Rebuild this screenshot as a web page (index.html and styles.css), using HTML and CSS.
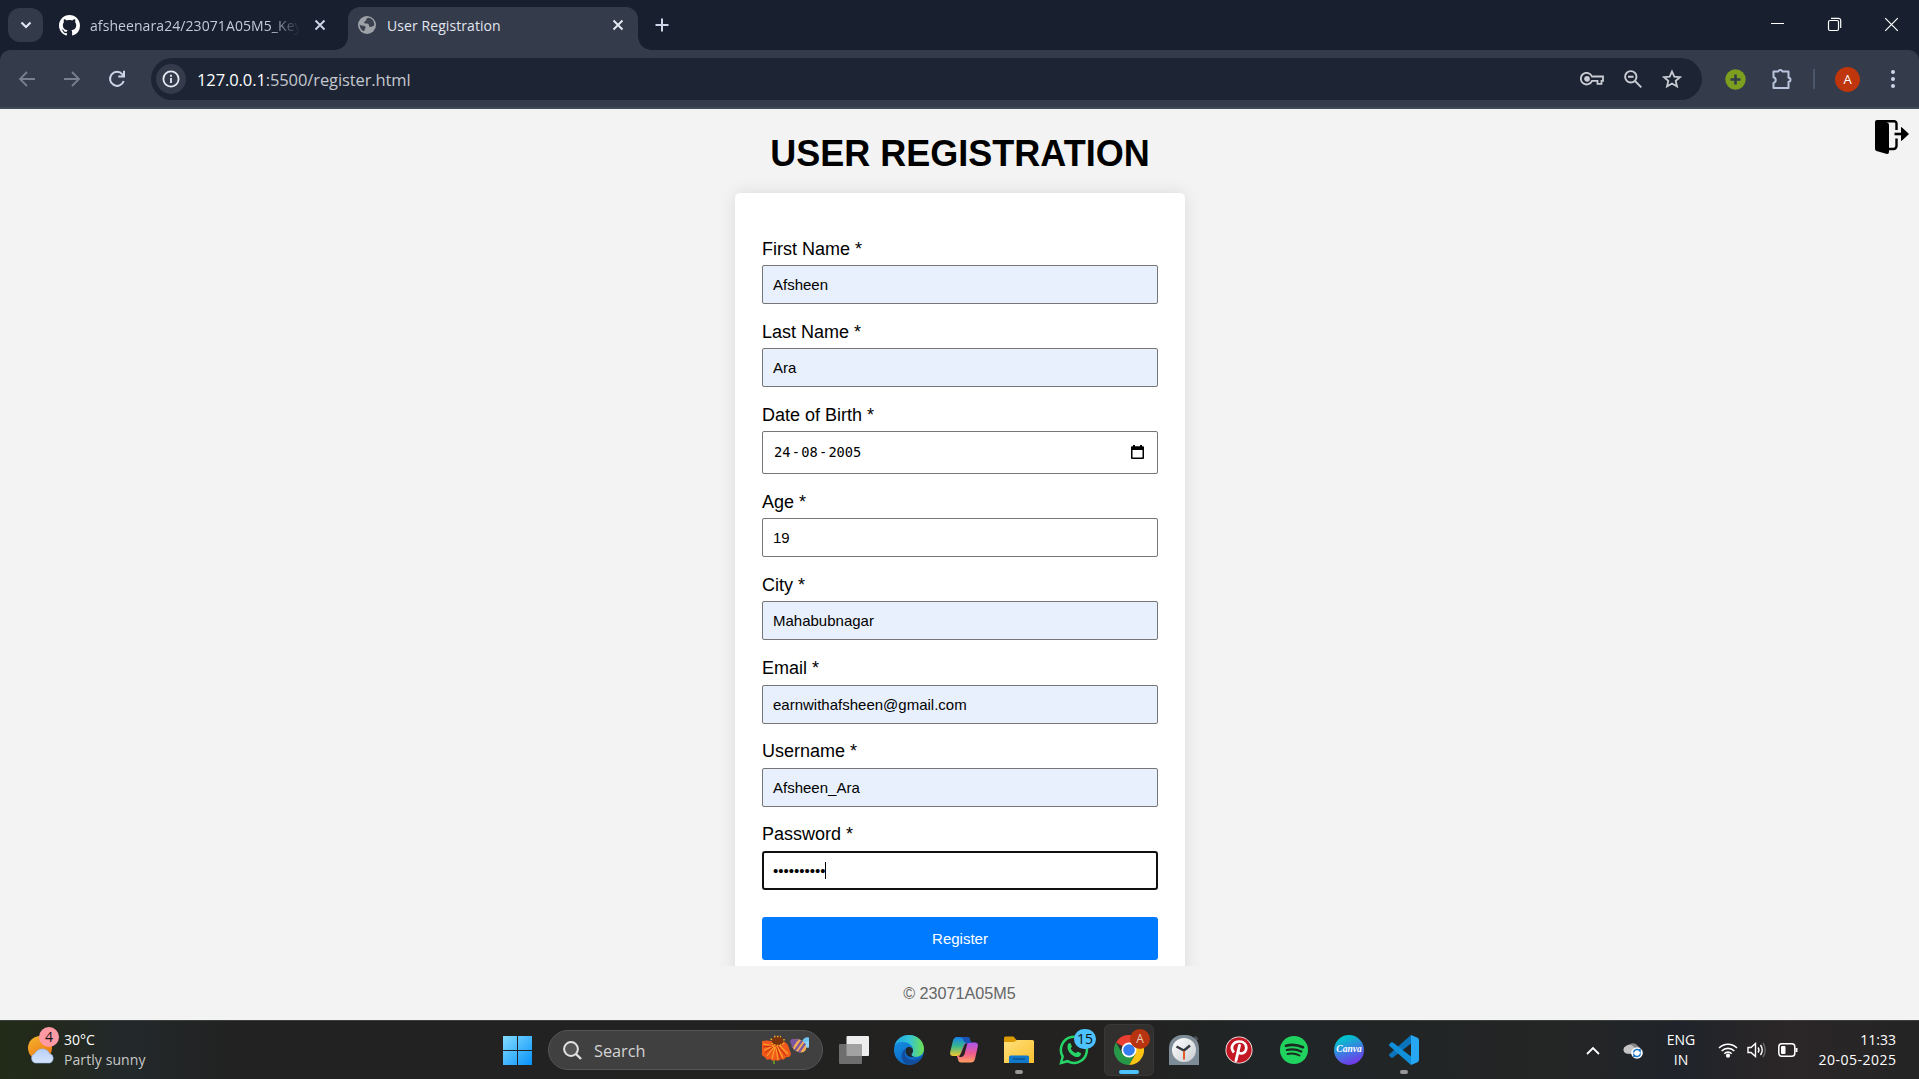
FILE: index.html
```html
<!DOCTYPE html>
<html lang="en">
<head>
<meta charset="utf-8">
<title>User Registration</title>
<link rel="stylesheet" href="styles.css">
</head>
<body>
<header class="tabstrip">
  <div class="tab-search"><svg width="12" height="12" viewBox="0 0 12 12" fill="none" stroke="#dfe5f2" stroke-width="2.2"><path d="M1.5 3.5 6 8l4.500-4.500"/></svg></div>
  <div class="tab">
    <svg width="21" height="21" viewBox="0 0 16 16" fill="#fff"><path d="M8 0C3.580 0 0 3.580 0 8c0 3.540 2.290 6.530 5.470 7.590.4.070.55-.17.55-.38 0-.19-.01-.82-.01-1.490-2.010.37-2.530-.49-2.690-.94-.09-.23-.48-.94-.82-1.130-.28-.15-.68-.52-.01-.53.63-.01 1.080.58 1.230.82.72 1.210 1.870.87 2.330.66.07-.52.28-.87.51-1.070-1.780-.2-3.640-.89-3.640-3.950 0-.87.31-1.590.82-2.150-.08-.2-.36-1.020.08-2.120 0 0 .67-.21 2.200.82.64-.18 1.320-.27 2-.27s1.360.09 2 .27c1.530-1.040 2.200-.82 2.200-.82.44 1.100.16 1.920.08 2.120.51.56.82 1.270.82 2.150 0 3.070-1.870 3.750-3.650 3.950.29.25.54.73.54 1.480 0 1.070-.01 1.930-.01 2.200 0 .21.15.46.55.38A8.010 8.010 0 0 0 16 8c0-4.420-3.580-8-8-8z"/></svg>
    <span class="tab-title fade">afsheenara24/23071A05M5_Key</span>
    <svg class="x" width="12" height="12" viewBox="0 0 12 12" stroke="#cdd6e8" stroke-width="1.900"><path d="M1.500 1.500l9 9M10.500 1.500l-9 9"/></svg>
  </div>
  <div class="tab active">
    <svg width="18" height="18" viewBox="0 0 18 18"><circle cx="9" cy="9" r="9" fill="#9da2a8"/><path d="M10.500 1.800C7.500 2 9 4.500 7.300 5.200 5.500 5.800 6 7.500 7.500 7.500c2 0 3.500.3 3.500 2 0 1.500 1.200 1.700 2.500 1.200l2.800-1.200C16.500 5 14 2.200 10.500 1.800zM1.700 8.500C3.500 10.500 6.500 8.800 7.500 10.800c.6 1.200-.8 2-.8 2.900 0 1-.7 1.300-1.700 1.300C2.800 13.500 1.700 11 1.700 8.500z" fill="#3b4351"/></svg>
    <span class="tab-title">User Registration</span>
    <svg class="x" width="12" height="12" viewBox="0 0 12 12" stroke="#e6eaf3" stroke-width="1.900"><path d="M1.500 1.500l9 9M10.500 1.500l-9 9"/></svg>
  </div>
  <svg class="new-tab" width="14" height="14" viewBox="0 0 14 14" stroke="#cdd6e8" stroke-width="2"><path d="M7 .5v13M.5 7h13"/></svg>
  <div class="window-buttons">
    <svg width="15" height="15" viewBox="0 0 15 15" stroke="#fff"><path d="M1 6.500h13"/></svg>
    <svg width="15" height="15" viewBox="0 0 15 15" fill="none" stroke="#fff" stroke-width="1.200"><rect x="1.500" y="3.500" width="10" height="10" rx="1.500"/><path d="M4 1.300h7.500a2.200 2.200 0 0 1 2.200 2.200V11"/></svg>
    <svg width="15" height="15" viewBox="0 0 15 15" stroke="#fff" stroke-width="1.200"><path d="M1.200 1.200l12.600 12.600M13.800 1.200 1.200 13.800"/></svg>
  </div>
</header>
<nav class="toolbar">
  <div class="nav-icons">
    <svg width="18" height="18" viewBox="0 0 18 18" fill="none" stroke="#77808f" stroke-width="1.800"><path d="M17 9H2.500M9 2 2 9l7 7"/></svg>
    <svg width="18" height="18" viewBox="0 0 18 18" fill="none" stroke="#77808f" stroke-width="1.800"><path d="M1 9h14.500M9 2l7 7-7 7"/></svg>
    <svg width="18" height="18" viewBox="0 0 18 18" fill="none" stroke="#cdd6e8" stroke-width="2"><path d="M15.700 11A7 7 0 1 1 14.500 4.500L16 6.200M16 .8v5.700h-5.700"/></svg>
  </div>
  <div class="omnibox">
    <span class="info"><svg width="18" height="18" viewBox="0 0 18 18" fill="none" stroke="#e6eaf3" stroke-width="1.800"><circle cx="9" cy="9" r="7.600"/><path d="M9 8v5M9 4.800v1.900"/></svg></span>
    <span class="url"><b>127.0.0.1</b>:5500/register.html</span>
    <div class="omni-icons">
      <svg width="24" height="14" viewBox="0 0 24 14" fill="none" stroke="#c9ccd3" stroke-width="1.800"><path d="M12 4.500h11v4.300h-1.500v3h-4v-3H12A5.800 5.800 0 1 1 12 4.500z"/><circle cx="7" cy="6.800" r="2" fill="#c9ccd3"/></svg>
      <svg width="18" height="18" viewBox="0 0 18 18" fill="none" stroke="#c9ccd3" stroke-width="1.900"><circle cx="6.800" cy="6.800" r="5.700"/><path d="M11 11l6.300 6.300M4 6.800h5.600"/></svg>
      <svg width="20" height="20" viewBox="0 0 20 20" fill="none" stroke="#c9ccd3" stroke-width="1.800"><path d="M10 2.500l2.300 5.200 5.700.5-4.300 3.700 1.300 5.600-5-3-5 3 1.300-5.600L2 8.200l5.700-.5z"/></svg>
    </div>
  </div>
  <div class="ext-icons">
    <svg class="add" width="21" height="21" viewBox="0 0 21 21"><circle cx="10.500" cy="10.500" r="10.200" fill="#7c9f1f"/><path d="M10.500 5.500v10M5.500 10.500h10" stroke="#333b4a" stroke-width="2.600"/></svg>
    <svg class="puzzle" width="22" height="22" viewBox="0 0 22 22" fill="none" stroke="#b9c5dd" stroke-width="2"><path d="M2.500 3.500h4.700a2.200 2.200 0 0 1 4.200 0h6.100v6.300a1.900 1.900 0 0 1 0 4v6.200h-15v-5a3 3 0 0 0 0-5.800z" stroke-linejoin="round"/></svg>
    <i class="divider"></i>
    <span class="avatar">A</span>
    <svg class="dots" width="4" height="20" viewBox="0 0 4 20" fill="#cdd6e8"><circle cx="2" cy="3" r="2"/><circle cx="2" cy="10" r="2"/><circle cx="2" cy="17" r="2"/></svg>
  </div>
</nav>
<main class="page">
  <svg class="logout" width="34" height="34" viewBox="0 0 34 34"><path d="M0 2a2 2 0 0 1 2-2h6l5 3q1 .7 1 2v27q0 2-2 1.900L1.500 31Q0 30.500 0 29z"/><path d="M6 1.200h13a2.500 2.500 0 0 1 2.500 2.500V10M21.500 18.500V26a3 3 0 0 1-3 3H14" fill="none" stroke="#000" stroke-width="2.400"/><path d="M19.500 14h8" stroke="#000" stroke-width="2.600"/><path d="M26.500 7.500 33.500 14l-7 6.500z" stroke="#000" stroke-linejoin="round"/></svg>
  <h1>USER REGISTRATION</h1>
  <form class="card">
    <div class="field"><label>First Name *</label><div class="input filled">Afsheen</div></div>
    <div class="field"><label>Last Name *</label><div class="input filled">Ara</div></div>
    <div class="field"><label>Date of Birth *</label><div class="input date"><span>24</span><span>-</span><span>08</span><span>-</span><span>2005</span><svg width="13" height="14" viewBox="0 0 13 14"><path d="M2 0h2v1.200h5V0h2v1.200h1Q13 1.200 13 2.200V13q0 1-1 1H1q-1 0-1-1V2.200q0-1 1-1h1zM1.500 5v7.500h10V5z"/></svg></div></div>
    <div class="field"><label>Age *</label><div class="input">19</div></div>
    <div class="field"><label>City *</label><div class="input filled">Mahabubnagar</div></div>
    <div class="field"><label>Email *</label><div class="input filled">earnwithafsheen@gmail.com</div></div>
    <div class="field"><label>Username *</label><div class="input filled">Afsheen_Ara</div></div>
    <div class="field"><label>Password *</label><div class="input focused">••••••••••<i class="caret"></i></div></div>
    <button class="register" type="button">Register</button>
  </form>
</main>
<footer class="copyright">© 23071A05M5</footer>
<div class="taskbar">
  <div class="weather">
    <div class="weather-icon">
      <svg width="28" height="28" viewBox="0 0 28 28"><defs><linearGradient id="sun" x2=".6" y2="1"><stop stop-color="#f3b52f"/><stop offset="1" stop-color="#ee7a12"/></linearGradient><linearGradient id="cloud" x2="0" y2="1"><stop stop-color="#b9cff7"/><stop offset="1" stop-color="#d5e4fb"/></linearGradient></defs><circle cx="12" cy="12" r="12" fill="url(#sun)"/><path d="M7 27a5 5 0 0 1 0-9.500 8 8 0 0 1 14.500 0A5 5 0 0 1 22 27z" fill="url(#cloud)" stroke="#8eaee8" stroke-width=".6"/></svg>
      <span class="badge alert">4</span>
    </div>
    <div class="weather-text"><span>30°C</span><span class="dim">Partly sunny</span></div>
  </div>
  <svg class="start" width="29" height="29" viewBox="0 0 29 29"><defs><linearGradient id="win" x2="1" y2="1"><stop stop-color="#83dcff"/><stop offset="1" stop-color="#0792fa"/></linearGradient></defs><path d="M0 0h14v14H0zM15 0h14v14H15zM0 15h14v14H0zM15 15h14v14H15z" fill="url(#win)"/></svg>
  <div class="search">
    <svg width="19" height="19" viewBox="0 0 19 19" fill="none" stroke="#e2e2e2" stroke-width="2"><circle cx="8" cy="8" r="6.900" fill="#555"/><path d="M13 13l5 5" stroke-width="2.400"/></svg>
    <span>Search</span>
    <svg class="flower" width="48" height="30" viewBox="0 0 48 30"><path d="M13 23v6" stroke="#5f8f22" stroke-width="2"/><path d="M1 6q5-1 9 0h12q5 2 6 7l2 6q-1 4-5 3-2 4-5 2-3 3-6 1-3 2-5-1-4 2-5-2-4-1-3-4z" fill="#f0591a"/><path d="M2 9l11 2M3 15l10-4M6 21l7-9M11 24l3-12M17 25l-2-13M22 23l-6-12M27 19l-9-9" stroke="#ffa62e" stroke-width="1.100"/><path d="M2 12l9-1M4 18l8-6M19.500 24l-4-12M25 21l-8-10" stroke="#c92b12"/><ellipse cx="16.500" cy="6" rx="6" ry="4.500" fill="#7a330d"/><path d="M10.500 8q6 5 12.500 0M10 5l1-2M13 1.500h7M23 4v3" fill="none" stroke="#f0b02a" stroke-width="1.500" stroke-dasharray="1.500 1.500"/><g transform="translate(38.500 10) rotate(35)"><path d="M0-4Q-1-11 5-12T9-5L4-1z" fill="#72c4f5"/><path d="M2-4Q6-12 10-9T6-1z" fill="#8ed3fa"/><ellipse cy="1" rx="8" ry="6" fill="#f3ad55"/><path d="M-4.500-4q-2 5 0 10M-.5-5v12M3.700-4.500v11" stroke="#7a55a0" stroke-width="2.300" fill="none"/><circle cx="-7" cy="1" r="3" fill="#7a55a0"/></g></svg>
  </div>
  <div class="apps">
    <div class="app"><svg width="30" height="30" viewBox="0 0 30 30"><rect x="7.500" y="1" width="22.500" height="20" rx="1" fill="#eee"/><rect y="9" width="23" height="20" rx="1" fill="#888" fill-opacity=".75"/></svg></div>
    <div class="app"><svg width="30" height="30" viewBox="0 0 30 30"><defs><linearGradient id="e1" x2="1"><stop stop-color="#1fa5e8"/><stop offset=".5" stop-color="#34c3d5"/><stop offset="1" stop-color="#70e14d"/></linearGradient><linearGradient id="e2" x2=".6" y2="1"><stop stop-color="#1698e8"/><stop offset="1" stop-color="#0b5fc0"/></linearGradient></defs><circle cx="15" cy="15" r="15" fill="url(#e2)"/><path d="M.5 11C2 4 8 0 15 0c9 0 15 6.500 15 14 0 5-4 8-8.500 8-3 0-4.500-1.500-4-3 1-1 1.500-2 1.500-3.500C19 10 14 7 9 7 5 7 2 8.500.5 11z" fill="url(#e1)"/><path d="M12 13.500C9 18 12 25 19 25c4 0 7-1 9.500-3.500C26 27 21 30 15 30 7 28 5 18 12 13.500z" fill="#124e9b"/><path d="M12 13.500c3-3 7-1 7 2 0 1.500-.5 2.500-1.500 3.500-.5 1.500 1 3 4 3h-4c-5 0-7-5-5.500-8.500z" fill="#20262a"/></svg></div>
    <div class="app"><svg width="28" height="26" viewBox="0 0 28 26"><defs><linearGradient id="c1" x2="0" y2="1"><stop stop-color="#1682ec"/><stop offset=".5" stop-color="#3bb989"/><stop offset="1" stop-color="#f5c82f"/></linearGradient><linearGradient id="c2" x2="0" y2="1"><stop stop-color="#ab55f0"/><stop offset=".55" stop-color="#ee5b8d"/><stop offset="1" stop-color="#ffa060"/></linearGradient></defs><path d="M7 0h10q2.500 0 3 3l1 3h-4q-2.500 0-3.200 2.500L11 16q-1 3-4 3H3q-3.500 0-2.800-4L3 3.500Q4 0 7 0z" fill="url(#c1)"/><path d="M21 25.500H11q-2.500 0-3-3L7 19q3 0 4-3l3-8q1-2.500 3.500-2.500H25q3.500 0 2.800 4L25 22q-1 3.500-4 3.500z" fill="url(#c2)"/><path d="M12.500 13l2-5q1-2 3-2l-3 11q-1 3-3 3H9q1.500-2 3.500-7z" fill="#242323"/><path d="M8 0h9q2.500 0 3 3l1 3h-4q-3 0-4-4-1-2-5-2z" fill="#1a54b9"/></svg></div>
    <div class="app"><svg width="30" height="28" viewBox="0 0 30 28"><defs><linearGradient id="fold" x2="1" y2="1"><stop stop-color="#ffe07d"/><stop offset="1" stop-color="#fbc02d"/></linearGradient></defs><path d="M0 2q0-1.500 1.500-1.500h8L12.500 4H28v8H0z" fill="#dc9b05"/><path d="M0 6h10l3-2h15.500Q30 4 30 5.500V27H0z" fill="url(#fold)"/><path d="M5 27v-6q0-1.500 1.500-1.500h17q1.500 0 1.500 1.500v6z" fill="#1079cc"/><path d="M9 23h12" stroke="#0b4b85" stroke-width="1.300"/></svg><i class="run"></i></div>
    <div class="app"><svg width="30" height="30" viewBox="0 0 30 30"><path d="M2 28l1.700-6.500A13 13 0 1 1 8.500 26.200z" fill="none" stroke="#25d366" stroke-width="2.500"/><path d="M9.500 8.500c1-1 2-.5 2.500.8l.8 2c.3 1-1.300 1.700-1 2.500 1 2 2.500 3.300 4.700 4.200.8.300 1.500-1.500 2.500-1.200l2.700 1.300c.7.500.3 3-2.200 3.800-4 1.200-12-5-11-11 .1-.9.500-1.800 1-2.400z" fill="#25d366"/></svg><span class="badge count">15</span></div>
    <div class="app current"><svg width="30" height="30" viewBox="0 0 30 30"><path d="M15 15 2 7.500A15 15 0 0 1 28 7.500z" fill="#ea3f31"/><path d="M15 7.500h13A15 15 0 0 1 15 30l6.500-11.300z" fill="#fbc415"/><path d="M2 7.500A15 15 0 0 0 15 30l6.500-11.300L15 22.500 8.500 18.800z" fill="#279847"/><circle cx="15" cy="15" r="7.500" fill="#fff"/><circle cx="15" cy="15" r="5.800" fill="#347df0"/></svg><span class="badge profile">A</span><i class="run on"></i></div>
    <div class="app"><svg width="30" height="30" viewBox="0 0 30 30"><defs><linearGradient id="face" x2="1" y2="1"><stop stop-color="#fff"/><stop offset="1" stop-color="#c9cdd1"/></linearGradient></defs><path d="M25 2l2-1 2.500 3-2 2z" fill="#4d5258"/><path d="M0 30V13A13 13 0 0 1 13 0h4a13 13 0 0 1 13 13v17z" fill="#7e8c98"/><circle cx="15" cy="15" r="12" fill="url(#face)"/><path d="M7.500 11.500 15 15.500l6-5" fill="none" stroke="#333a40" stroke-width="2.500"/><path d="M15 16v8.500" stroke="#df5b28" stroke-width="2"/></svg></div>
    <div class="app"><svg width="28" height="28" viewBox="0 0 28 28"><circle cx="14" cy="14" r="13.500" fill="#fff"/><circle cx="14" cy="14" r="12.700" fill="#c41724"/><path d="M9 16.500C4.500 11.500 8 5.500 14.500 5.500c9 0 8.500 12 1.700 12-1.500 0-2.500-.7-3-1.600" fill="none" stroke="#fff" stroke-width="2.700"/><path d="M14.500 9.500 11 24.500" stroke="#fff" stroke-width="2.900" stroke-linecap="round"/></svg></div>
    <div class="app"><svg width="28" height="28" viewBox="0 0 28 28" fill="none" stroke="#1c2a20" stroke-linecap="round"><circle cx="14" cy="14" r="14" fill="#1fd35e" stroke="none"/><path d="M6 9.800q8.500-2.500 17 1.500" stroke-width="2.600"/><path d="M6.800 14q7.500-2 14.500 1.600" stroke-width="2.200"/><path d="M7.500 18q6.500-1.500 12 1.500" stroke-width="1.900"/></svg></div>
    <div class="app"><span class="canva">Canva</span></div>
    <div class="app"><svg width="30" height="30" viewBox="0 0 30 30"><path d="M22 0v8.500L4 22.500q-1 .7-2 0L.5 21q-1-1 0-2z" fill="#0a75bd"/><path d="M22 30v-8.500L4 7.500q-1-.7-2 0L.5 9q-1 1 0 2z" fill="#118fd8"/><path d="M22 0l6.500 2.700Q30 3.500 30 5v20q0 1.500-1.500 2.300L22 30z" fill="#27a6f2"/></svg><i class="run"></i></div>
  </div>
  <div class="tray">
    <svg class="up" width="14" height="9" viewBox="0 0 14 9" fill="none" stroke="#fff" stroke-width="1.800"><path d="M1 8l6-6 6 6"/></svg>
    <svg class="cloud" width="22" height="18" viewBox="0 0 22 18"><path d="M5 8a6 6 0 0 1 11-3 5 5 0 0 1 1 8H5z" fill="#858585"/><path d="M4 12.500A4 4 0 0 1 4 5q4-3 8 1l4 6.500z" fill="#c4c4c4"/><circle cx="15" cy="12" r="5.800" fill="#fff"/><path d="M11.500 11.500a3.600 3.600 0 0 1 6.500-1.500V8M18.500 12.500a3.600 3.600 0 0 1-6.500 1.500v2" fill="none" stroke="#1475c4" stroke-width="1.500"/></svg>
    <div class="lang"><span>ENG</span><span>IN</span></div>
    <svg class="wifi" width="20" height="16" viewBox="0 0 20 16" fill="none" stroke="#fff" stroke-width="1.600"><path d="M1 6a12.700 12.700 0 0 1 18 0M3.700 9a8.900 8.900 0 0 1 12.600 0M6.300 11.700a5.200 5.200 0 0 1 7.400 0"/><circle cx="10" cy="13.700" r="1.300" fill="#fff"/></svg>
    <svg class="sound" width="20" height="16" viewBox="0 0 20 16" fill="none" stroke="#fff" stroke-width="1.400"><path d="M1 5.500h3L8.500 1.500v13L4 10.500H1z"/><path d="M11 5.500q2 2.500 0 5M13.500 3q3.500 5 0 10"/><path d="M16 1q4.500 7 0 14" stroke="#666"/></svg>
    <svg class="battery" width="20" height="14" viewBox="0 0 20 14" fill="none" stroke="#fff" stroke-width="1.500"><rect x=".8" y=".8" width="16" height="12.400" rx="3"/><rect x="3" y="3" width="4.500" height="8" rx="1" fill="#fff" stroke="none"/><path d="M18.500 5v4" stroke-width="2"/></svg>
    <div class="clock"><span>11:33</span><span class="day">20-05-2025</span></div>
  </div>
</div>
</body>
</html>
```
FILE: styles.css
```css
* { box-sizing: border-box; }
body {
  margin: 0;
  width: 1919px;
  height: 1079px;
  overflow: hidden;
  display: flex;
  flex-direction: column;
  background: #f3f3f3;
  font-family: "Liberation Sans", Arial, sans-serif;
}
svg { display: block; flex: none; }

/* Browser tabs */
.tabstrip {
  flex: none;
  height: 50px;
  display: flex;
  align-items: center;
  background: #18202f;
  font-family: "Open Sans", "Noto Sans", sans-serif;
}
.tab-search {
  width: 35px;
  height: 34px;
  margin-left: 8px;
  border-radius: 12px;
  background: #333b4b;
  display: flex;
  align-items: center;
  justify-content: center;
}
.tab { display: flex; align-items: center; width: 305px; padding-left: 16px; padding-right: 22px; }
.tab-title { margin-left: 10px; width: 210px; font-size: 14px; letter-spacing: 0.08px; color: #c3cbdb; white-space: nowrap; overflow: hidden; }
.fade { -webkit-mask-image: linear-gradient(90deg, #000 180px, transparent 210px); mask-image: linear-gradient(90deg, #000 180px, transparent 210px); }
.tab .x { margin-left: auto; }
.tab.active {
  position: relative;
  width: 290px;
  height: 43px;
  align-self: flex-end;
  padding: 0 14px 7px 10px;
  border-radius: 12px 12px 0 0;
  background: #343b4b;
}
.tab.active::before, .tab.active::after {
  content: "";
  position: absolute;
  bottom: 0;
  width: 13px;
  height: 13px;
}
.tab.active::before { left: -13px; background: radial-gradient(circle at 0 0, transparent 12.5px, #343b4b 13px); }
.tab.active::after { right: -13px; background: radial-gradient(circle at 100% 0, transparent 12.5px, #343b4b 13px); }
.tab.active .tab-title { margin-left: 11px; color: #e2e6ef; }
.new-tab { margin-left: 17px; }
.window-buttons { margin-left: auto; margin-right: 20px; margin-bottom: 2px; display: flex; gap: 42px; }

/* Address bar */
.toolbar {
  flex: none;
  height: 59px;
  display: flex;
  align-items: center;
  padding-top: 1px;
  border-bottom: 2px solid #434a57;
  background: #343b4b;
  border-radius: 10px 10px 0 0;
  box-shadow: 0 -10px 0 #18202f;
  font-family: "Open Sans", "Noto Sans", sans-serif;
}
.tabstrip { position: relative; }
.nav-icons { display: flex; gap: 27px; width: 151px; padding-left: 18px; }
.omnibox {
  width: 1551px;
  height: 42px;
  display: flex;
  align-items: center;
  padding: 0 20px 0 5px;
  border-radius: 21px;
  background: #1d2535;
}
.info { width: 30px; height: 30px; border-radius: 50%; background: #343b4b; display: flex; align-items: center; justify-content: center; }
.url { margin-left: 11px; font-size: 16.500px; letter-spacing: -0.1px; color: #c5c8ce; }
.url b { font-weight: 400; color: #fff; }
.omni-icons { margin-left: auto; display: flex; align-items: center; gap: 20px; }
.ext-icons { flex: 1; display: flex; align-items: center; }
.add { margin-left: 23px; }
.puzzle { margin-left: 25px; }
.divider { width: 2px; height: 20px; margin-left: 20px; background: #4b566c; }
.avatar {
  width: 25px;
  height: 25px;
  margin-left: 20px;
  border-radius: 50%;
  background: #bf360c;
  color: #fff;
  font-size: 13px;
  line-height: 25px;
  text-align: center;
}
.dots { margin-left: 31px; }

/* Registration page */
.page { position: relative; height: 857px; overflow: hidden; flex: none; }
.logout { position: absolute; right: 10px; top: 11px; }
h1 { margin: 24px 0 19px; padding-left: 1px; font-size: 36px; line-height: 41px; text-align: center; }
.card {
  width: 450px;
  height: 860px;
  margin: 0 auto;
  padding: 45.500px 27px 0;
  border-radius: 5px;
  background: #fff;
  box-shadow: 0 0 17px rgba(0, 0, 0, 0.1);
  position: relative;
  left: 0.500px;
}
.field { margin-bottom: 17.700px; }
.field label { display: block; margin-bottom: 6.500px; font-size: 18px; line-height: 20px; }
.input {
  height: 39px;
  display: flex;
  align-items: center;
  padding: 0 10px;
  border: 1px solid #767676;
  border-radius: 2px;
  background: #fff;
  font-size: 15px;
}
.filled { background: #e8f0fe; }
.focused { border: 2px solid #101010; border-radius: 3px; padding: 0 9px; }
.caret { width: 1px; height: 17px; margin-left: -1px; background: #000; }
.date { height: 42.600px; padding: 0 13px 1px 11px; gap: 1.300px; font: 13.700px "DejaVu Sans Mono", monospace; letter-spacing: -0.050px; }
.date svg { margin-left: auto; }
.register {
  display: block;
  width: 100%;
  height: 43px;
  margin-top: 27px;
  border: 0;
  border-radius: 3px;
  background: #007bff;
  color: #fff;
  font: 15px "Liberation Sans", Arial, sans-serif;
}
.copyright { height: 54px; flex: none; line-height: 55px; text-align: center; font-size: 16.200px; color: #666; }

/* Windows taskbar */
.taskbar {
  height: 59px;
  flex: none;
  display: flex;
  align-items: center;
  border-top: 1px solid #3b403c;
  background: linear-gradient(90deg, #222b18 0, #23291c 50px, #23292b 120px, #222 230px, #232221 1130px, #202527 1260px, #242525 1560px, #20242a 1680px, #2b2627 1790px, #242424 1919px);
  color: #fff;
  font-family: "Open Sans", "Noto Sans", sans-serif;
  font-size: 14px;
  line-height: 20px;
}
.taskbar span { white-space: nowrap; }
.weather { width: 503px; padding-left: 28px; display: flex; align-items: center; gap: 8px; }
.weather-icon { position: relative; }
.badge { position: absolute; border-radius: 50%; text-align: center; }
.alert { left: 11px; top: -9px; width: 20px; height: 20px; background: #ff99a4; color: #111; }
.weather-text, .lang, .clock { display: flex; flex-direction: column; }
.dim { color: #c7c7c7; letter-spacing: 0.08px; }
.search {
  width: 275px;
  height: 40px;
  margin-left: 16px;
  padding: 0 13px 0 14px;
  display: flex;
  align-items: center;
  border: 1px solid #565656;
  border-radius: 20px;
  background: #404040;
  color: #d4d4d4;
  font-size: 16.300px;
}
.search span { margin: 2px 0 0 12px; }
.flower { margin-left: auto; }
.apps { display: flex; gap: 7px; margin-left: 7px; }
.app { position: relative; width: 48px; height: 50px; display: flex; align-items: center; justify-content: center; }
.current { border-radius: 5px; background: #32302e; box-shadow: 0 0 0 1px #3a3836; }
.run { position: absolute; left: 20px; bottom: 1px; width: 8px; height: 4px; border-radius: 2px; background: #979797; }
.run.on { left: 14px; width: 20px; background: #4cc2ff; }
.count { left: 24px; top: 4px; width: 22px; height: 20px; border-radius: 10px; background: #4cc2ff; color: #111; }
.profile { left: 25px; top: 4px; width: 20px; height: 20px; background: #b83410; color: #e8c9bd; font-size: 12px; }
.canva {
  width: 30px;
  height: 30px;
  border-radius: 50%;
  background: linear-gradient(160deg, #00c4cc 15%, #4a6de5 60%, #7d2ae8 95%);
  font: italic bold 9.500px/29px "Liberation Serif", serif;
  text-align: center;
}
.tray { flex: 1; display: flex; align-items: center; margin-left: 158px; }
.cloud { margin-left: 22px; }
.lang { margin-left: 21px; width: 32px; align-items: center; }
.wifi { margin-left: 21px; }
.sound { margin-left: 9px; }
.battery { margin-left: 11px; }
.clock { margin-left: auto; margin-right: 23px; align-items: flex-end; }
.day { letter-spacing: 0.5px; margin-right: -0.5px; }
```
